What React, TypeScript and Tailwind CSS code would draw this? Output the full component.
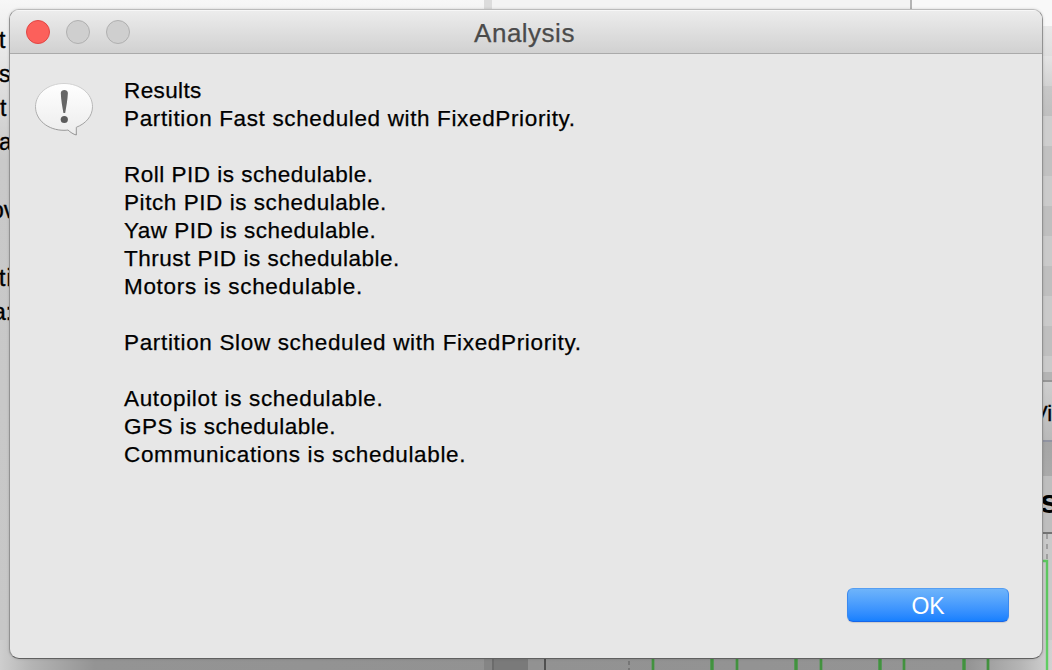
import React from "react";

const editorLines = [
  { text: "t", cls: "-ml-px" },
  { text: "s", cls: "-ml-px" },
  { text: "t", cls: "ml-0" },
  { text: "a", cls: "-ml-px" },
  { text: "", cls: "" },
  { text: "ov", cls: "-ml-[9px]" },
  { text: "", cls: "" },
  { text: "ti", cls: "-ml-px tracking-[1px]" },
  { text: "a:", cls: "-ml-[7px]" },
];

const stripes = [
  "h-[26px] bg-[#f8f8f8]",
  "h-[30px] bg-gradient-to-b from-[#e9e9e9] to-[#dedede]",
  "h-[30px] bg-gradient-to-b from-[#e4e4e4] to-[#d2d2d2]",
  "h-[30px] bg-gradient-to-b from-[#c8c8c8] to-[#bfbfbf]",
  "h-[30px] bg-[#cecece]",
  "h-[30px] bg-[#c1c1c1]",
  "h-[30px] bg-[#cbcbcb]",
  "h-[30px] bg-[#bfbfbf]",
  "h-[30px] bg-[#cacaca]",
  "h-[30px] bg-[#bfbfbf]",
  "h-[30px] bg-[#cacaca]",
  "h-[30px] bg-[#bfbfbf]",
  "h-[16px] bg-[#cacaca]",
  "h-[8px] bg-[#b4b4b4]",
  "h-[2px] bg-[#969696]",
];

const lines = [
  { text: "Results", cls: "tracking-[0.39px]" },
  { text: "Partition Fast scheduled with FixedPriority.", cls: "tracking-[0.64px]" },
  { text: "", cls: "" },
  { text: "Roll PID is schedulable.", cls: "tracking-[0.5px]" },
  { text: "Pitch PID is schedulable.", cls: "tracking-[0.56px]" },
  { text: "Yaw PID is schedulable.", cls: "tracking-[0.49px]" },
  { text: "Thrust PID is schedulable.", cls: "tracking-[0.51px]" },
  { text: "Motors is schedulable.", cls: "tracking-[0.68px]" },
  { text: "", cls: "" },
  { text: "Partition Slow scheduled with FixedPriority.", cls: "tracking-[0.66px]" },
  { text: "", cls: "" },
  { text: "Autopilot is schedulable.", cls: "tracking-[0.67px]" },
  { text: "GPS is schedulable.", cls: "tracking-[0.5px]" },
  { text: "Communications is schedulable.", cls: "tracking-[0.65px]" },
];

const traces = [653, 712, 737, 796, 821, 880, 904, 964, 988];

function Backdrop() {
  return (
    <div className="flex h-full flex-col">
      <div className="flex h-[640px] shrink-0">
        <div className="w-[484px] shrink-0 bg-gradient-to-b from-[#f7f7f7] via-[#c9c9c9] via-25% to-[#c7c7c7] pt-[23px]">
          {editorLines.map((l, i) => (
            <div key={i} className="h-[34px] text-[23px] leading-[34px] text-black [-webkit-text-stroke:0.4px]">
              <div className={l.cls}>{l.text}</div>
            </div>
          ))}
        </div>
        <div className="w-2 shrink-0 bg-[#dcdcdc]" />
        <div className="w-[418px] shrink-0 bg-[#f3f3f3]" />
        <div className="w-[2px] shrink-0 bg-[#b4b4b4]" />
        <div className="flex w-[140px] shrink-0 flex-col bg-[#cacaca]">
          {stripes.map((s, i) => (
            <div key={i} className={s} />
          ))}
          <div className="h-[58px] bg-gradient-to-b from-[#cecece] to-[#b9b9b9] pl-[121px] text-[22px] leading-[64px] whitespace-nowrap text-black [-webkit-text-stroke:0.3px]">
            Vi
          </div>
          <div className="h-[2px] bg-[#9194a2]" />
          <div className="h-[34px] bg-gradient-to-b from-[#a5a5a5] to-[#aaaaaa]" />
          <div className="h-[56px] bg-[#bebebe] pl-[128px] text-[34px] leading-[51px] font-bold whitespace-nowrap text-black">
            s
          </div>
          <div className="h-[2px] bg-[#747474]" />
          <svg className="h-[106px] w-[140px]" viewBox="912 534 140 106">
            <path d="M1047 534V560" stroke="#a0a0a0" strokeWidth="2" strokeDasharray="5 5" />
            <path d="M1040 561H1047V640" stroke="#5cc65f" strokeWidth="2.4" fill="none" />
          </svg>
        </div>
      </div>
      <svg className="h-[30px] w-full shrink-0" viewBox="0 640 1052 30">
        <defs>
          <linearGradient id="floor">
            <stop offset="0" stopColor="#cecece" />
            <stop offset=".03" stopColor="#b4b4b4" />
            <stop offset=".09" stopColor="#949494" />
            <stop offset=".5" stopColor="#929292" />
            <stop offset=".92" stopColor="#949494" />
            <stop offset=".97" stopColor="#b5b5b5" />
            <stop offset="1" stopColor="#d2d2d2" />
          </linearGradient>
        </defs>
        <path d="M0 640H1052V670H0Z" fill="url(#floor)" />
        <path d="M484 640H492V670H484Z" fill="#858585" />
        <path d="M492 640H528V670H492Z" fill="#7a7a7a" />
        <path d="M492 640H494V670H492Z" fill="#6c6c6c" />
        <path d="M544 640H546V670H544Z" fill="#505050" />
        <path d="M629 661V665M629 668V670" stroke="#777" strokeWidth="2" />
        {traces.map((x, i) => (
          <g key={x}>
            <path d={`M${x} 640V670`} stroke="#579758" strokeWidth={i % 2 ? 4 : 3} />
            <path d={`M${x} 640V670`} stroke="#43923f" strokeWidth="2" />
          </g>
        ))}
        <path d="M1047 640V670" stroke="#60cd63" strokeWidth="2.4" />
      </svg>
    </div>
  );
}

function AlertIcon() {
  return (
    <svg className="mt-[26px] ml-[23px] h-[58px] w-[62px] shrink-0" viewBox="33 80 62 58">
      <defs>
        <linearGradient id="bubble" x1="0" y1="0" x2="0" y2="1">
          <stop offset="0" stopColor="#ffffff" />
          <stop offset="1" stopColor="#ececec" />
        </linearGradient>
        <linearGradient id="rim" x1="0" y1="0" x2="0" y2="1">
          <stop offset="0" stopColor="#d2d2d2" />
          <stop offset="1" stopColor="#929292" />
        </linearGradient>
      </defs>
      <path
        d="M64 83.5C48 83.5 35.5 93.7 35.5 106.7C35.5 120 48 130.3 64 130.3C65.5 130.3 66.8 130.2 68 130C70.5 132.4 73.3 134.2 76.3 135V127.3C86 123.5 92.5 116 92.5 106.7C92.5 93.7 80 83.5 64 83.5Z"
        fill="url(#bubble)"
        stroke="url(#rim)"
        strokeWidth="1"
      />
      <path d="M60.8 93C60.8 89 67.9 89 67.9 93C67.6 100 66.2 107 65.2 113H63.4C62.4 107 61 100 60.8 93Z" fill="#666" />
      <circle cx="64.3" cy="119.5" r="3.6" fill="#5c5c5c" />
    </svg>
  );
}

export default function App() {
  return (
    <div className="relative h-[670px] w-[1052px] overflow-hidden bg-[#c9c9c9] font-['Liberation_Sans',Arial,sans-serif]">
      <Backdrop />
      <div className="absolute top-[9px] left-[9px] flex h-[650px] w-[1034px] flex-col overflow-hidden rounded-[10px] border border-x-[#929292] border-t-[#bbbbbb] border-b-[#606060] bg-[#e7e7e7] shadow-[0_0_3px_rgba(0,0,0,0.16)]">
        <div className="grid h-[44px] shrink-0 grid-cols-[1fr_auto_1fr] items-center border-b border-[#aaaaaa] bg-gradient-to-b from-[#ededed] to-[#d1d1d1] shadow-[inset_0_1px_0_#f7f7f7]">
          <div className="flex gap-4 pl-4">
            <div className="h-6 w-6 rounded-full border border-[#e24644] bg-[#fc605b]" />
            <div className="h-6 w-6 rounded-full border border-[#b0b0b0] bg-[#cfcfcf]" />
            <div className="h-6 w-6 rounded-full border border-[#b0b0b0] bg-[#cfcfcf]" />
          </div>
          <div className="pt-[2px] pr-[3px] text-[26px] leading-8 tracking-[0.5px] text-[#4b4b4b] [-webkit-text-stroke:0.25px]">
            Analysis
          </div>
          <div />
        </div>
        <div className="flex">
          <AlertIcon />
          <div className="pt-[23px] pl-[29px] text-[22.5px] leading-7 whitespace-nowrap text-black [-webkit-text-stroke:0.25px]">
            {lines.map((line, i) => (
              <div key={i} className={`h-7 ${line.cls}`}>
                {line.text}
              </div>
            ))}
          </div>
        </div>
        <div className="mt-auto flex justify-end pr-[33px] pb-[36px]">
          <button className="h-[34px] w-[162px] rounded-[6px] border border-t-[#559ef2] border-x-[#3a89ef] border-b-[#1766e8] bg-gradient-to-b from-[#6eb4fa] to-[#1680ff] pt-[2px] text-[23px] leading-[30px] text-white shadow-[0_1px_1px_rgba(0,0,0,0.12)]">
            OK
          </button>
        </div>
      </div>
    </div>
  );
}
